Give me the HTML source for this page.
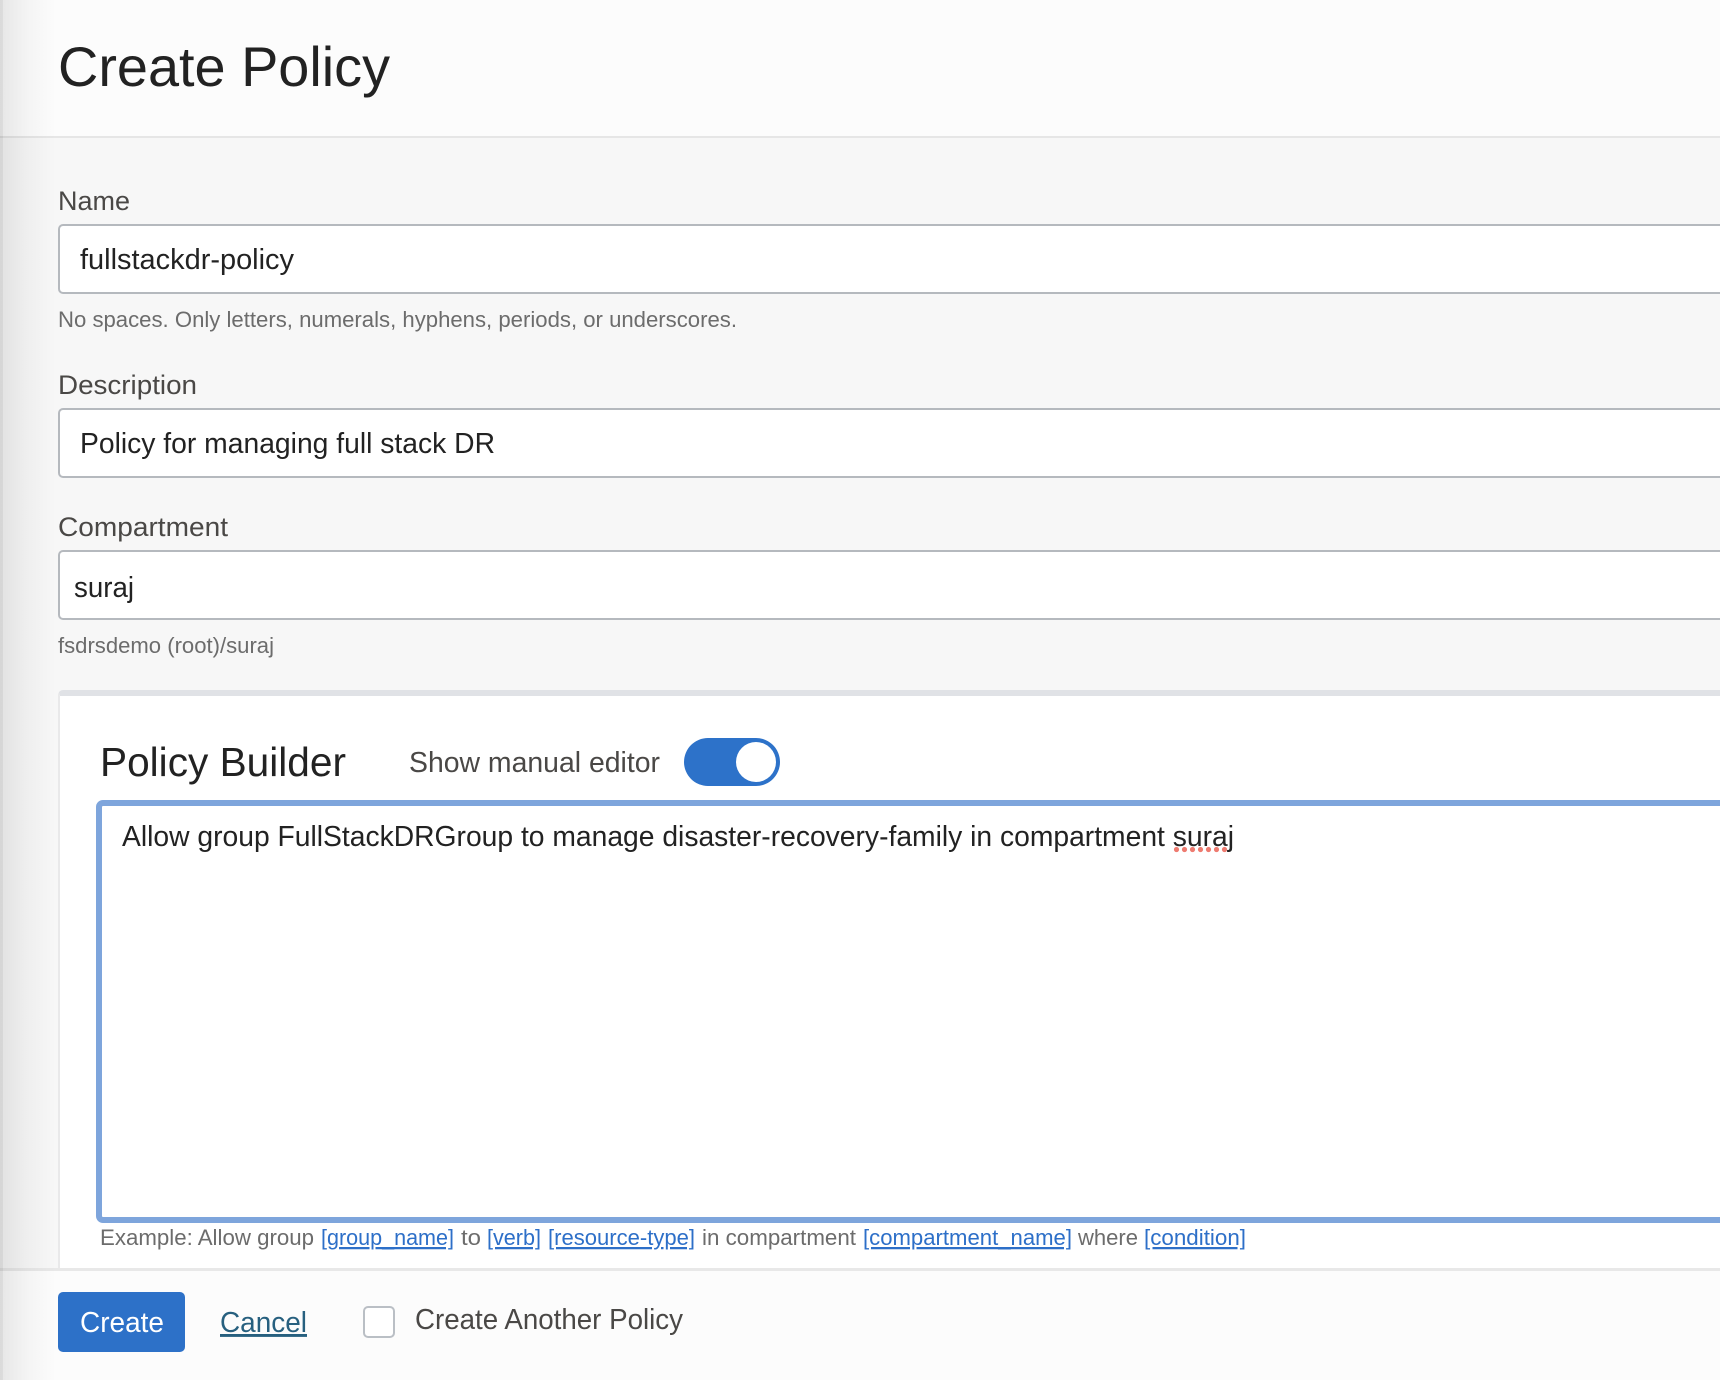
<!DOCTYPE html>
<html lang="en">
<head>
<meta charset="utf-8">
<title>Create Policy</title>
<style>
html,body{margin:0;padding:0;background:#f7f7f7;}
#page{position:relative;width:1720px;height:1380px;overflow:hidden;background:#f7f7f7;font-family:"Liberation Sans",Arial,sans-serif;}
.abs{position:absolute;box-sizing:border-box;}
.header{left:0;top:0;width:1720px;height:136px;background:#fcfcfc;}
.hline{left:0;top:136px;width:1720px;height:2px;background:#e6e6e6;}
.input{left:58px;width:1700px;height:70px;background:#fff;border:2px solid #b5b9be;border-radius:5px;}
.panel{left:58px;top:690px;width:1700px;height:600px;background:#fff;border-left:2px solid #e9e9ea;border-top:6px solid #e0e2e6;border-radius:5px 0 0 0;}
.toggle{left:684px;top:738px;width:96px;height:48px;border-radius:24px;background:#2d72c9;}
.knob{left:736px;top:742px;width:40px;height:40px;border-radius:50%;background:#fff;}
.area{left:96px;top:800px;width:1700px;height:423px;background:#fff;border:6px solid #7ea5dc;border-radius:7px;}
.footer{left:0;top:1268px;width:1720px;height:112px;background:#fcfcfc;border-top:3px solid #e8e8e8;}
.btn{left:58px;top:1292px;width:127px;height:60px;background:#2d71c8;border-radius:5px;}
.check{left:363px;top:1306px;width:32px;height:32px;border:2px solid #babfc5;border-radius:5px;background:#fff;}
.shade{left:0;top:0;width:56px;height:1380px;background:linear-gradient(to right,rgba(0,0,0,.085),rgba(0,0,0,.03) 50%,rgba(0,0,0,0));}
.edge{left:0;top:0;width:3px;height:1380px;background:rgba(0,0,0,.05);}
svg{position:absolute;left:0;top:0;}
text{font-family:"Liberation Sans",Arial,sans-serif;}
.dark{fill:#222;}
.lab{fill:#4a4846;}
.hint{fill:#6c6c6c;font-size:22.5px;}
.link{fill:#2d6fc8;font-size:22.5px;text-decoration:underline;}
</style>
</head>
<body>
<div id="page">
  <div class="abs header"></div>
  <div class="abs hline"></div>
  <div class="abs input" style="top:224px"></div>
  <div class="abs input" style="top:408px"></div>
  <div class="abs input" style="top:550px"></div>
  <div class="abs panel"></div>
  <div class="abs toggle"></div>
  <div class="abs knob"></div>
  <div class="abs area"></div>
  <div class="abs footer"></div>
  <div class="abs btn"></div>
  <div class="abs check"></div>
  <div class="abs shade"></div>
  <div class="abs edge"></div>
  <svg width="1720" height="1380" viewBox="0 0 1720 1380">
    <text class="dark" x="58" y="86" font-size="56" textLength="332" lengthAdjust="spacingAndGlyphs">Create Policy</text>

    <text class="lab" x="58" y="210" font-size="27" textLength="72" lengthAdjust="spacingAndGlyphs">Name</text>
    <text class="dark" x="80" y="269" font-size="29" textLength="214" lengthAdjust="spacingAndGlyphs">fullstackdr-policy</text>
    <text class="hint" x="58" y="327" textLength="679" lengthAdjust="spacingAndGlyphs">No spaces. Only letters, numerals, hyphens, periods, or underscores.</text>

    <text class="lab" x="58" y="394" font-size="27" textLength="139" lengthAdjust="spacingAndGlyphs">Description</text>
    <text class="dark" x="80" y="453" font-size="29" textLength="415" lengthAdjust="spacingAndGlyphs">Policy for managing full stack DR</text>

    <text class="lab" x="58" y="536" font-size="27" textLength="170" lengthAdjust="spacingAndGlyphs">Compartment</text>
    <text class="dark" x="74" y="597" font-size="29" textLength="60" lengthAdjust="spacingAndGlyphs">suraj</text>
    <text class="hint" x="58" y="653" textLength="216" lengthAdjust="spacingAndGlyphs">fsdrsdemo (root)/suraj</text>

    <text class="dark" x="100" y="776" font-size="41" textLength="246" lengthAdjust="spacingAndGlyphs">Policy Builder</text>
    <text class="lab" x="409" y="772" font-size="29" textLength="251" lengthAdjust="spacingAndGlyphs">Show manual editor</text>

    <text class="dark" x="122" y="846" font-size="29" textLength="1112" lengthAdjust="spacingAndGlyphs">Allow group FullStackDRGroup to manage disaster-recovery-family in compartment suraj</text>
    <g fill="#ee7b70">
      <circle cx="1176.5" cy="849.5" r="2.6"/><circle cx="1184.5" cy="849.5" r="2.6"/><circle cx="1192.5" cy="849.5" r="2.6"/><circle cx="1200.5" cy="849.5" r="2.6"/><circle cx="1208.5" cy="849.5" r="2.6"/><circle cx="1216.5" cy="849.5" r="2.6"/><circle cx="1224.5" cy="849.5" r="2.6"/>
    </g>

    <text class="hint" x="100" y="1245" textLength="214" lengthAdjust="spacingAndGlyphs">Example: Allow group</text>
    <text class="link" x="321" y="1245" textLength="133" lengthAdjust="spacingAndGlyphs">[group_name]</text>
    <text class="hint" x="461" y="1245" textLength="20" lengthAdjust="spacingAndGlyphs">to</text>
    <text class="link" x="487" y="1245" textLength="54" lengthAdjust="spacingAndGlyphs">[verb]</text>
    <text class="link" x="548" y="1245" textLength="147" lengthAdjust="spacingAndGlyphs">[resource-type]</text>
    <text class="hint" x="702" y="1245" textLength="154" lengthAdjust="spacingAndGlyphs">in compartment</text>
    <text class="link" x="863" y="1245" textLength="209" lengthAdjust="spacingAndGlyphs">[compartment_name]</text>
    <text class="hint" x="1078" y="1245" textLength="60" lengthAdjust="spacingAndGlyphs">where</text>
    <text class="link" x="1144" y="1245" textLength="102" lengthAdjust="spacingAndGlyphs">[condition]</text>

    <text x="80" y="1332" font-size="29" fill="#fff" textLength="84" lengthAdjust="spacingAndGlyphs">Create</text>
    <text x="220" y="1332" font-size="29" fill="#27607f" text-decoration="underline" textLength="87" lengthAdjust="spacingAndGlyphs">Cancel</text>
    <text class="lab" x="415" y="1329" font-size="29" textLength="268" lengthAdjust="spacingAndGlyphs">Create Another Policy</text>
  </svg>
</div>
</body>
</html>
